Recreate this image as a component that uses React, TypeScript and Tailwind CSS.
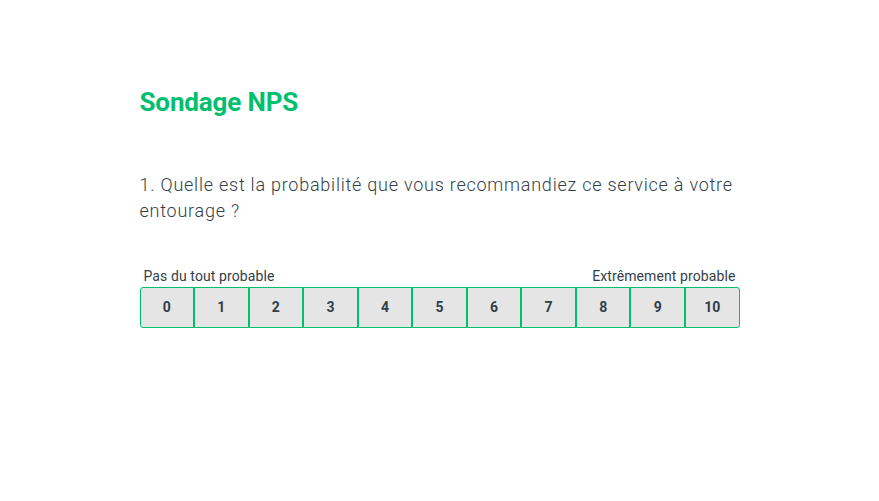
export default function App() {
    const scores = [0, 1, 2, 3, 4, 5, 6, 7, 8, 9, 10]

    return (
        <div className="min-h-[501px] bg-white" style={{ fontFamily: 'Roboto, "Noto Sans", sans-serif' }}>
            <div className="mx-auto w-[600px] pt-[86px]">
                <h1 className="text-[26px] font-bold leading-[32px] tracking-[-0.15px] text-[#00bf6f]">
                    Sondage NPS
                </h1>

                <p className="mt-[54px] text-[18px] font-light leading-[26px] tracking-[0.76px] text-[#333e48]">
                    1. Quelle est la probabilité que vous recommandiez ce service à votre entourage ?
                </p>

                <div className="mt-[42px]">
                    <div className="flex justify-between px-1 text-[14px] leading-[20px] tracking-[0.1px] text-[#333e48]">
                        <span>Pas du tout probable</span>
                        <span>Extrêmement probable</span>
                    </div>
                    <div className="mt-[1px] flex h-[41px] overflow-hidden rounded-[3px] border border-[#00bf6f] bg-[#e5e5e5]">
                        {scores.map((n) => (
                            <button
                                key={n}
                                type="button"
                                className={`flex flex-1 items-center justify-center text-[14px] font-bold text-[#333e48] ${n > 0 ? 'border-l-2 border-[#00bf6f]' : ''}`}
                            >
                                {n}
                            </button>
                        ))}
                    </div>
                </div>
            </div>
        </div>
    )
}
